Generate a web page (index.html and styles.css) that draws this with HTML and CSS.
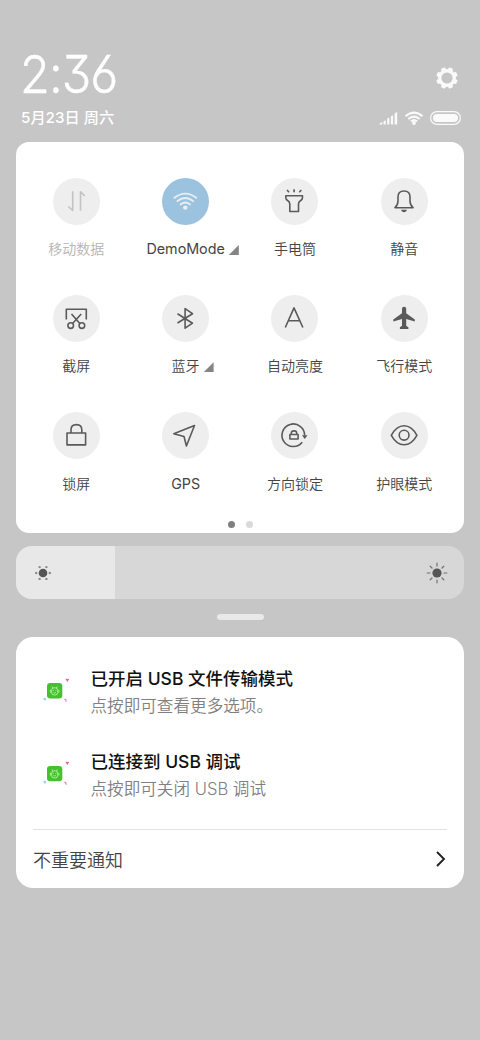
FILE: index.html
```html
<!DOCTYPE html>
<html lang="zh-CN">
<head>
<meta charset="utf-8">
<title>控制中心</title>
<link rel="stylesheet" href="styles.css">
</head>
<body>
<main class="shade">
  <header class="status">
    <div class="status-row">
      <div class="clock">2:36</div>
      <svg class="gear" width="24" height="24" viewBox="-12 -12 24 24"><circle r="7.300" fill="none" stroke="#fafafa" stroke-width="3.400"/><g fill="#fafafa"><rect id="tooth" x="-2.300" y="-10.800" width="4.600" height="4" rx="1" transform="rotate(22.500)"/><use href="#tooth" transform="rotate(45)"/><use href="#tooth" transform="rotate(90)"/><use href="#tooth" transform="rotate(135)"/><use href="#tooth" transform="rotate(180)"/><use href="#tooth" transform="rotate(225)"/><use href="#tooth" transform="rotate(270)"/><use href="#tooth" transform="rotate(315)"/></g></svg>
    </div>
    <div class="status-row date-row">
      <div class="date">5月23日 周六</div>
      <svg class="indicators" width="82" height="16" viewBox="0 0 82 16">
        <g fill="#fafafa"><path d="M0.500 14.500V13.600L3.300 12V14.500ZM4.500 11.600L6.700 10.300V14.500H4.500ZM8.200 8.600L10.400 7.600V14.500H8.200ZM11.900 6.200L14.100 5.200V14.500H11.900ZM15.600 3.400L18.200 2V14.500H15.600Z"/><circle cx="35" cy="13" r="1.900"/><rect x="54" y="4" width="25" height="8" rx="4"/></g>
        <g fill="none" stroke="#fafafa"><path stroke-width="2" d="M26.500 6.300Q35 -1 43.500 6.300M29.300 9Q35 4.200 40.700 9M31.900 11.400Q35 8.900 38.100 11.400"/><rect x="51.600" y="1.700" width="29.800" height="12.600" rx="6.300" stroke-width="1.200"/></g>
      </svg>
    </div>
  </header>

  <section class="panel">
    <div class="tiles">
      <div class="tile off"><svg class="icon" viewBox="0 0 47 47"><path d="M19.700 13.300V32.500L15.300 28.500M27.500 32.700V13.800L31.700 17.800"/></svg><div class="label">移动数据</div></div>
      <div class="tile on"><svg class="icon" viewBox="0 0 47 47"><path d="M11.800 20.200Q23.300 11 34.800 20.200M14.800 23.600Q23.300 16.500 31.800 23.600M18 26.800Q23.300 22.200 28.600 26.800"/><circle class="solid" cx="23.300" cy="29.600" r="2.200"/></svg><div class="label latin">DemoMode<i class="more"></i></div></div>
      <div class="tile"><svg class="icon" viewBox="0 0 47 47"><path d="M14.800 17.700H31.500V19.500Q31.500 21.500 29.700 22.500Q27.500 23.700 27.500 26V33.500H18.800V26Q18.800 23.700 16.600 22.500Q14.800 21.500 14.800 19.500ZM16 12L18 14.200M23.100 11.300V14.300M30.300 12L28.300 14.200"/></svg><div class="label">手电筒</div></div>
      <div class="tile"><svg class="icon" viewBox="0 0 47 47"><path d="M14 29.700Q17 27 17 23V19Q17 13 23 13T29 19V23Q29 27 32 29.700Z"/><path class="solid" d="M20 31.800H26Q25.500 34.200 23 34.200T20 31.800Z"/></svg><div class="label">静音</div></div>

      <div class="tile"><svg class="icon" viewBox="0 0 47 47"><path d="M13.300 24.500V14.200H33.300V24.500M18.500 19L26.800 28.500M28.200 19L19.600 28.500"/><circle cx="17.700" cy="30.600" r="2.800"/><circle cx="28.900" cy="30.600" r="2.800"/></svg><div class="label">截屏</div></div>
      <div class="tile"><svg class="icon" viewBox="0 0 47 47"><path d="M15.500 18.800L30.500 28.200L23.100 33.200V13.600L30.500 18.700L15.500 28"/></svg><div class="label">蓝牙<i class="more"></i></div></div>
      <div class="tile"><svg class="icon" viewBox="0 0 47 47"><path d="M14.300 32.500L23 12.900L31.900 32.500M17.400 25.700H28.800"/></svg><div class="label">自动亮度</div></div>
      <div class="tile"><svg class="icon" viewBox="0 0 47 47"><path class="solid" d="M21 13.800Q21 11.800 23.100 11.800T25.200 13.800V18.300L33.800 24.600V26.600L25.200 24V30.800L27.400 32.300V34H18.900V32.300L21 30.800V24L12.300 26.600V24.600L21 18.300Z"/></svg><div class="label">飞行模式</div></div>

      <div class="tile"><svg class="icon" viewBox="0 0 47 47"><path d="M14 21H32.600V32.900H14ZM18 20.500V17.800Q18 12.600 23.400 12.600T28.800 17.800V20.500"/></svg><div class="label">锁屏</div></div>
      <div class="tile"><svg class="icon" viewBox="0 0 47 47"><path d="M32.500 13.500L11.800 21.800L22 24.500L24.400 34Z"/></svg><div class="label latin">GPS</div></div>
      <div class="tile"><svg class="icon" viewBox="0 0 47 47"><path d="M33.600 23.500A11.300 11.300 0 1 0 31.200 30.200M18.900 22.500H27.100V27H18.900ZM20.300 22V21Q20.300 18.900 23 18.900T25.700 21V22"/><path class="solid" d="M31 23.200H36.500L33.700 27Z"/></svg><div class="label">方向锁定</div></div>
      <div class="tile"><svg class="icon" viewBox="0 0 47 47"><path d="M10.300 23.300Q15.500 13.700 23.100 13.700T35.900 23.300Q30.700 32.700 23.100 32.700T10.300 23.300Z"/><circle cx="23.100" cy="23.200" r="4.900"/></svg><div class="label">护眼模式</div></div>
    </div>
    <div class="pager"><i class="dot current"></i><i class="dot"></i></div>
  </section>

  <div class="brightness">
    <div class="level"><svg width="20" height="20" viewBox="-10 -10 20 20" fill="#8a8a8a"><circle r="4.300" fill="#555"/><circle cx="-6.800" r="1.200"/><circle cx="6.800" r="1.200"/><circle cx="-3.400" cy="-5.900" r="1.200"/><circle cx="3.400" cy="-5.900" r="1.200"/><circle cx="-3.400" cy="5.900" r="1.200"/><circle cx="3.400" cy="5.900" r="1.200"/></svg></div>
    <svg width="22" height="22" viewBox="-11 -11 22 22"><circle r="4.600" fill="#555"/><path stroke="#707070" stroke-width="1.200" stroke-linecap="round" d="M0-7V-9.800M0 7V9.800M-7 0H-9.800M7 0H9.800M-5-5L-6.900-6.900M5-5L6.900-6.900M-5 5L-6.900 6.900M5 5L6.900 6.900"/></svg>
  </div>
  <div class="handle"></div>

  <section class="notices">
    <article class="notice">
      <svg class="app" width="30" height="30" viewBox="0 0 30 30"><rect x="6" y="7" width="15.300" height="15.500" rx="3.200" fill="#46c02f"/><g id="robot" fill="none" stroke="#c9f5bb" stroke-width="0.800"><path d="M11 10.500L11.900 12M16.300 10.500L15.400 12"/><rect x="10.600" y="11.800" width="6.100" height="7.200" rx="2.600"/><path d="M9.400 13.800V16.600M17.900 13.800V16.600M12.400 16.500Q13.650 17.600 14.900 16.500M12.400 13.900V14.900M14.900 13.900V14.900"/></g><path d="M24.300 2.800L28.200 3L26.400 6Z" fill="#ee6292"/><path d="M2 22.500L5 22L4.200 25Z" fill="#6ccaf0"/><path d="M23.300 23.400L25 23.200L24.500 25L26 25.200" fill="none" stroke="#ee7fc0"/></svg>
      <div><div class="title">已开启 USB 文件传输模式</div><div class="body">点按即可查看更多选项。</div></div>
    </article>
    <article class="notice">
      <svg class="app" width="30" height="30" viewBox="0 0 30 30"><rect x="6" y="7" width="15.300" height="15.300" rx="3.200" fill="#46c02f"/><use href="#robot"/><path d="M24.300 2.800L28.200 3L26.400 6Z" fill="#ee6292"/><path d="M2 22.500L5 22L4.200 25Z" fill="#6ccaf0"/><path d="M23.300 23.400L25 23.200L24.500 25L26 25.200" fill="none" stroke="#ee7fc0"/></svg>
      <div><div class="title">已连接到 USB 调试</div><div class="body">点按即可关闭 USB 调试</div></div>
    </article>
    <footer class="minor"><span>不重要通知</span><svg width="12" height="18" viewBox="0 0 12 18"><path d="M2 2L9 9L2 16" fill="none" stroke="#222" stroke-width="1.900"/></svg></footer>
  </section>
</main>
</body>
</html>
```

FILE: styles.css
```css
* { box-sizing: border-box; }
body { margin: 0; background: #c6c6c6; font-family: Inter, "Noto Sans CJK SC", sans-serif; }
.shade { height: 1040px; padding: 46px 16px 0; overflow: hidden; }
.status { height: 96px; padding: 0 3px 0 5px; color: #fff; }
.status-row { display: flex; justify-content: space-between; align-items: center; height: 60px; }
.clock { margin: -2px 0 0 -1px; font: 300 52px/60px Inter, sans-serif; letter-spacing: -1px; white-space: nowrap; font-feature-settings: "cv09", "cv03", "ss01"; transform: scaleX(0.935); transform-origin: 0 50%; -webkit-text-stroke: 0.400px #fff; }
.gear { margin: 4px 2px 0 0; }
.date-row { height: 24px; }
.date { font-size: 15.200px; line-height: 24px; font-weight: 500; white-space: nowrap; }

.panel { height: 391px; padding: 35.700px 5px 0 5.600px; border-radius: 13px; background: #fff; }
.tiles { display: grid; grid-template-columns: repeat(4, 1fr); grid-auto-rows: 117.300px; }
.tile { display: flex; flex-direction: column; align-items: center; color: #444; }
.icon { width: 47px; height: 47px; border-radius: 50%; background: #eee; fill: none; stroke: #5a5a5a; stroke-width: 1.600; stroke-linejoin: round; }
.icon .solid { fill: #5a5a5a; stroke: none; }
.off { color: #b4b4b4; }
.off .icon { stroke: #c3c3c3; }
.on .icon { background: #9bc3df; stroke: #e9eef1; stroke-width: 1.800; }
.on .icon .solid { fill: #e9eef1; }
.label { position: relative; margin-top: 14.300px; font-size: 14px; font-weight: 350; line-height: 20px; white-space: nowrap; }
.label.latin { font-size: 14.300px; font-weight: 400; }
.more { position: absolute; left: calc(100% + 4px); bottom: 4px; width: 10px; height: 10px; background: #848484; clip-path: polygon(100% 0, 100% 100%, 0 100%); }
.pager { display: flex; justify-content: center; gap: 11px; margin-top: -8.900px; }
.dot { width: 7px; height: 7px; border-radius: 50%; background: #dadada; }
.dot.current { background: #808080; }

.brightness { display: flex; justify-content: space-between; align-items: center; height: 53px; margin-top: 13px; padding-right: 16px; border-radius: 16px; background: #d7d7d7; overflow: hidden; }
.level { display: flex; align-items: center; width: 99px; height: 53px; padding-left: 16.700px; background: #e8e8e8; }
.handle { width: 47px; height: 6px; margin: 15px auto 17px; border-radius: 3px; background: #e9e9e9; }

.notices { height: 251px; padding: 28px 17px 0; border-radius: 17px; background: #fff; }
.notice { display: flex; height: 83px; gap: 19.500px; }
.app { margin: 11px 0 0 8px; flex: none; }
.title, .body { line-height: 27px; white-space: nowrap; }
.title { color: #111; font-size: 17.500px; font-weight: 500; }
.body { margin-top: 1px; color: #808080; font-size: 16.600px; font-weight: 350; }
.minor { display: flex; justify-content: space-between; align-items: center; height: 59px; margin-top: -2px; border-top: 1px solid #e4e4e4; color: #444; font-size: 18px; font-weight: 350; }
```
